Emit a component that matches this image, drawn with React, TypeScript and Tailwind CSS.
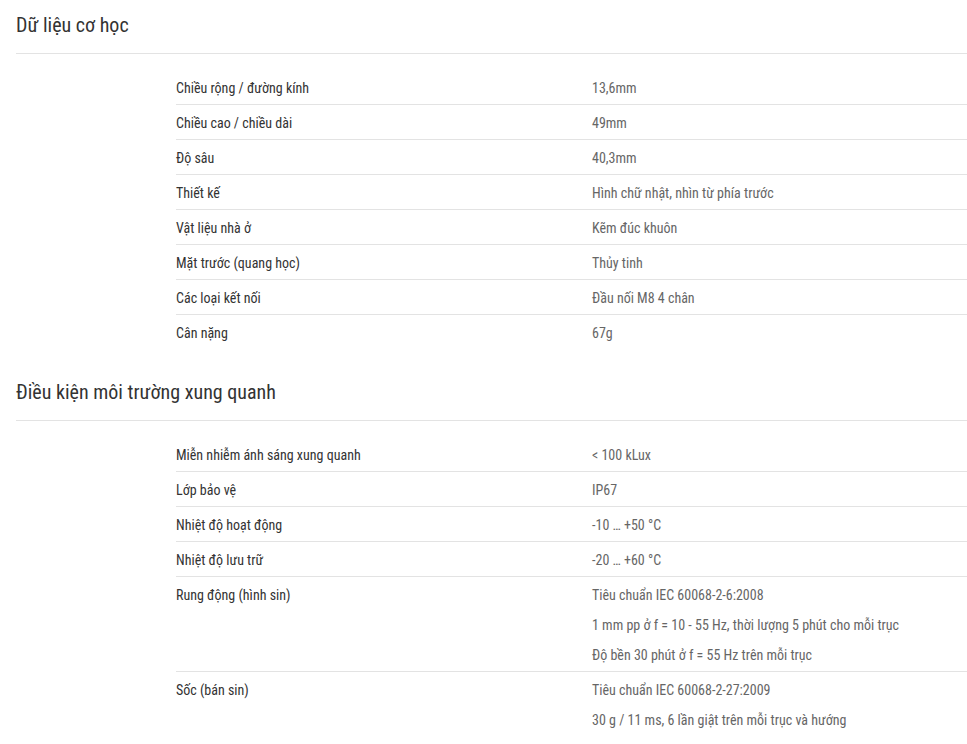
const sections = [
  {
    title: "Dữ liệu cơ học",
    rows: [
      { label: "Chiều rộng / đường kính", values: ["13,6mm"] },
      { label: "Chiều cao / chiều dài", values: ["49mm"] },
      { label: "Độ sâu", values: ["40,3mm"] },
      { label: "Thiết kế", values: ["Hình chữ nhật, nhìn từ phía trước"] },
      { label: "Vật liệu nhà ở", values: ["Kẽm đúc khuôn"] },
      { label: "Mặt trước (quang học)", values: ["Thủy tinh"] },
      { label: "Các loại kết nối", values: ["Đầu nối M8 4 chân"] },
      { label: "Cân nặng", values: ["67g"] },
    ],
  },
  {
    title: "Điều kiện môi trường xung quanh",
    rows: [
      { label: "Miễn nhiễm ánh sáng xung quanh", values: ["< 100 kLux"] },
      { label: "Lớp bảo vệ", values: ["IP67"] },
      { label: "Nhiệt độ hoạt động", values: ["-10 … +50 °C"] },
      { label: "Nhiệt độ lưu trữ", values: ["-20 … +60 °C"] },
      {
        label: "Rung động (hình sin)",
        values: [
          "Tiêu chuẩn IEC 60068-2-6:2008",
          "1 mm pp ở f = 10 - 55 Hz, thời lượng 5 phút cho mỗi trục",
          "Độ bền 30 phút ở f = 55 Hz trên mỗi trục",
        ],
      },
      {
        label: "Sốc (bán sin)",
        values: [
          "Tiêu chuẩn IEC 60068-2-27:2009",
          "30 g / 11 ms, 6 lần giật trên mỗi trục và hướng",
        ],
      },
    ],
  },
];

export default function App() {
  return (
    <div className="min-h-screen bg-white pl-4 font-['Roboto',sans-serif] [font-stretch:87.5%]">
      {sections.map((section) => (
        <section key={section.title} className="pt-[10px] mb-[18px]">
          <h2 className="border-b border-[#e3e3e3] pb-[13px] text-[20px] leading-[30px] font-normal text-[#333]">
            {section.title}
          </h2>
          <div className="mt-4 ml-[160px]">
            {section.rows.map((row, i) => (
              <div
                key={row.label}
                className={
                  "flex pt-[3px] pb-px text-[14px] " +
                  (i < section.rows.length - 1 ? "border-b border-[#e3e3e3]" : "")
                }
              >
                <div className="w-[416px] shrink-0 leading-[30px] text-[#333]">{row.label}</div>
                <div className="flex-1 text-[#666]">
                  {row.values.map((v) => (
                    <div key={v} className="leading-[30px]">
                      {v}
                    </div>
                  ))}
                </div>
              </div>
            ))}
          </div>
        </section>
      ))}
    </div>
  );
}
